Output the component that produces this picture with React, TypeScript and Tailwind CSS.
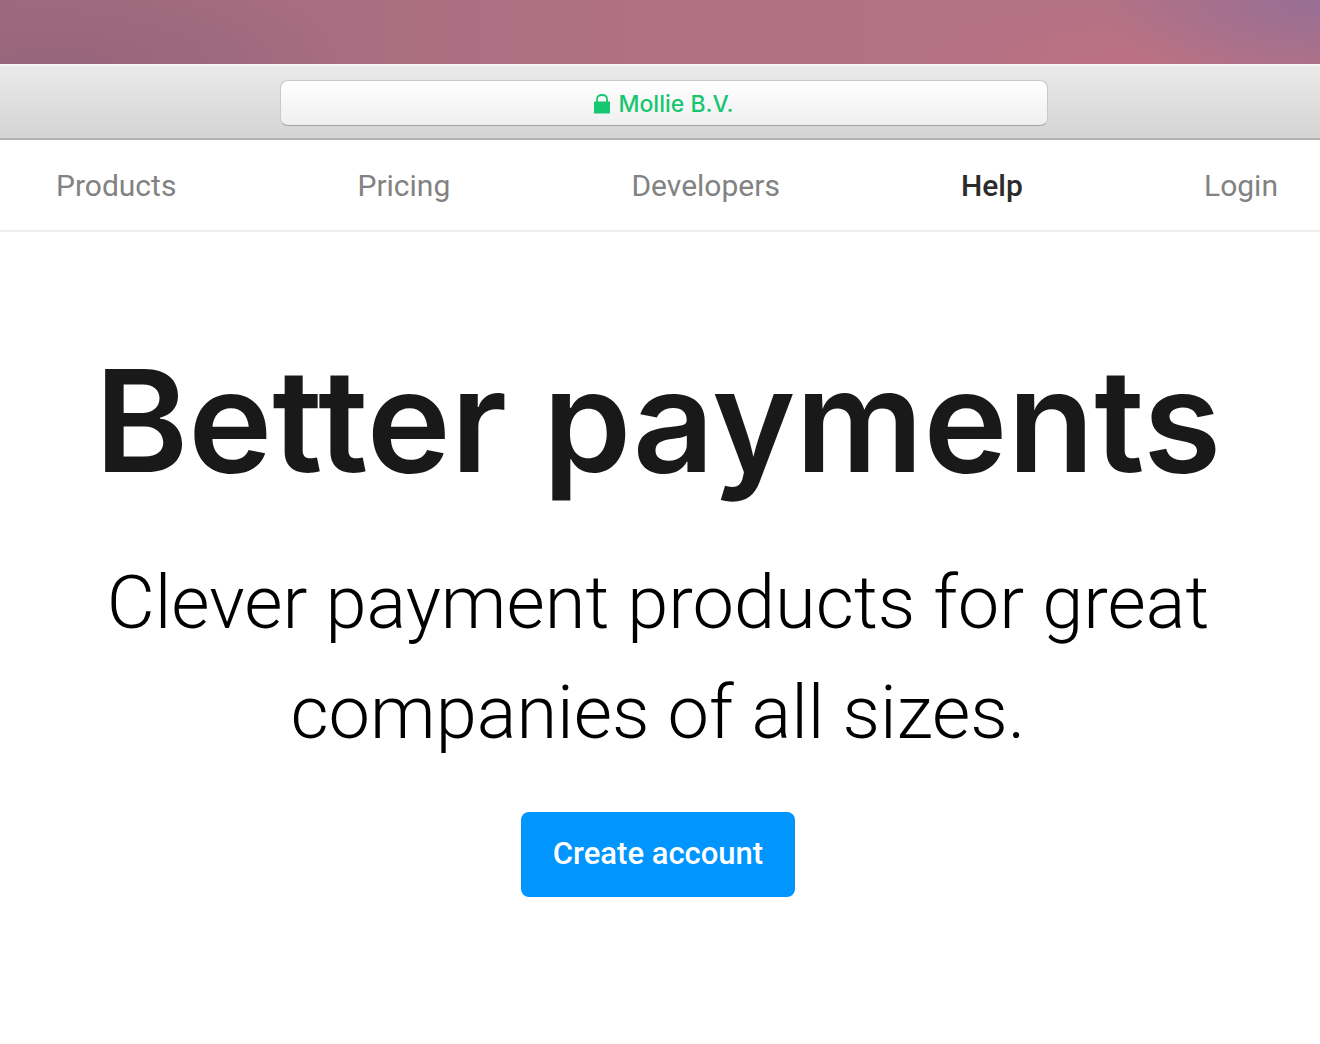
import React from 'react'

interface NavItem {
  label: string
  href: string
  active?: boolean
}

const navItems: NavItem[] = [
  { label: 'Products', href: '#products' },
  { label: 'Pricing', href: '#pricing' },
  { label: 'Developers', href: '#developers' },
  { label: 'Help', href: '#help', active: true },
  { label: 'Login', href: '#login' },
]

const LockIcon: React.FC = () => (
  <svg className="h-5 w-4 shrink-0" viewBox="0 0 16 20" fill="none" aria-hidden="true">
    <path d="M3 8V5C3 2.400 5.100 1 8 1s5 1.400 5 4V8" stroke="#17c671" strokeWidth="1.8" />
    <rect y="7.5" width="16" height="12" rx="0.5" fill="#17c671" />
  </svg>
)

const BrowserBar: React.FC = () => (
  <div className="flex h-19 justify-center border-t-2 border-b-2 border-t-[#f5f5f5] border-b-[#b3b3b3] bg-linear-to-b from-[#eaeaea] to-[#d4d4d4] pt-3.5 pr-8 pl-10">
    <button
      type="button"
      className="flex h-[46px] w-full max-w-3xl items-center justify-center gap-2 rounded-lg border border-[#c9c9cb] border-b-[#a3a3a3] bg-linear-to-b from-white to-[#efefef] pt-0.5 font-['Inter',sans-serif] text-[23px] font-medium text-[#17c671]"
    >
      <LockIcon />
      Mollie B.V.
    </button>
  </div>
)

const Navigation: React.FC = () => (
  <nav className="border-b-2 border-[#eeeeee] pr-[42px] pl-14">
    <ul className="flex h-[90px] items-center justify-between text-[30px]">
      {navItems.map((item) => (
        <li key={item.label}>
          <a href={item.href} className={item.active ? 'font-medium text-[#2b2b2b]' : 'text-[#828282]'}>
            {item.label}
          </a>
        </li>
      ))}
    </ul>
  </nav>
)

const Hero: React.FC = () => (
  <main className="flex flex-col items-center pt-[104px] pr-11 pl-10 text-center">
    <h1 className="font-['Inter',sans-serif] text-[142px] leading-[168px] font-semibold text-[#191919]">Better payments</h1>
    <p className="mt-11 max-w-[1200px] text-[74px] leading-[110px] font-light text-black">
      Clever payment products for great companies of all sizes.
    </p>
    <button
      type="button"
      className="mt-11 h-[85px] rounded-lg bg-[#0095ff] px-8 text-[31px] font-medium text-white"
    >
      Create account
    </button>
  </main>
)

const App: React.FC = () => {
  return (
    <div className="bg-white font-['Roboto',sans-serif]">
      {/* Desktop wallpaper above the window */}
      <div className="h-16 bg-linear-to-r from-[#9f6b7c] via-[#b07084] via-45% to-[#b57284]">
        <div className="h-full bg-[radial-gradient(ellipse_220px_90px_at_100%_0%,#976f95,transparent),radial-gradient(ellipse_300px_90px_at_5%_100%,#97657c,transparent),radial-gradient(ellipse_240px_60px_at_85%_100%,#bb7183,transparent)]" />
      </div>
      <BrowserBar />
      <Navigation />
      <Hero />
    </div>
  )
}

export default App
